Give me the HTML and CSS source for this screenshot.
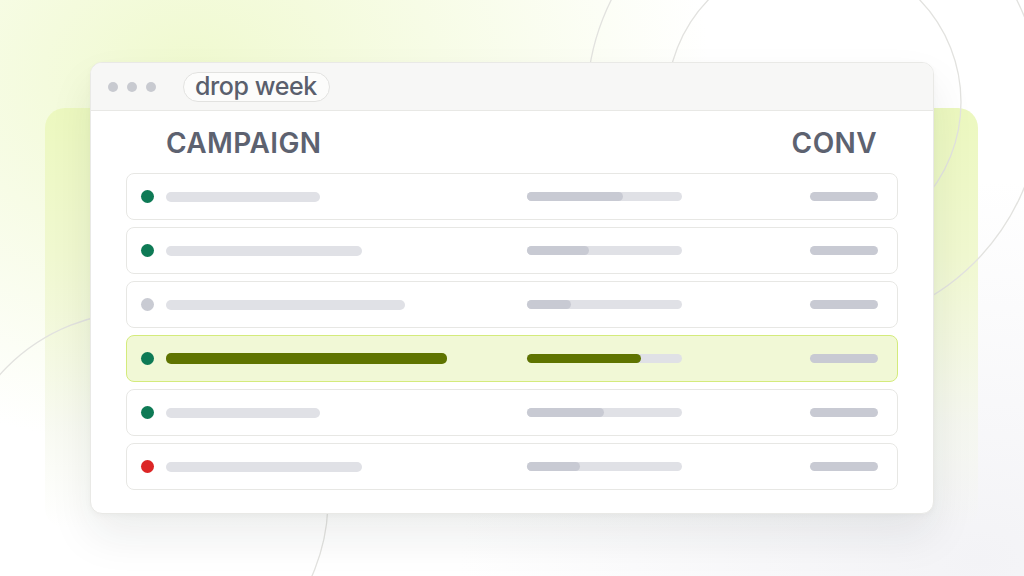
FILE: index.html
```html
<!DOCTYPE html>
<html lang="en">
<head>
<meta charset="utf-8">
<title>drop week</title>
<link rel="stylesheet" href="styles.css">
</head>
<body>
<div class="stage">
  <div class="backdrop"></div>
  <svg class="rings" width="1024" height="576" viewBox="0 0 1024 576" aria-hidden="true">
    <circle cx="814" cy="102" r="147" />
    <circle cx="814" cy="102" r="227" />
    <circle cx="140" cy="500" r="188" />
  </svg>
  <div class="window">
    <div class="titlebar">
      <span class="dots"><i></i><i></i><i></i></span>
      <span class="tab">drop week</span>
    </div>
    <div class="content">
      <div class="head"><span>CAMPAIGN</span><span>CONV</span></div>
      <div class="rows">
        <div class="row">
          <span class="dot dot-green"></span>
          <span class="name" style="width:154px"></span>
          <span class="track"><span class="fill" style="width:96px"></span></span>
          <span class="conv"></span>
        </div>
        <div class="row">
          <span class="dot dot-green"></span>
          <span class="name" style="width:196px"></span>
          <span class="track"><span class="fill" style="width:62px"></span></span>
          <span class="conv"></span>
        </div>
        <div class="row">
          <span class="dot dot-gray"></span>
          <span class="name" style="width:239px"></span>
          <span class="track"><span class="fill" style="width:44px"></span></span>
          <span class="conv"></span>
        </div>
        <div class="row row-active">
          <span class="dot dot-green"></span>
          <span class="name" style="width:281px"></span>
          <span class="track"><span class="fill" style="width:114px"></span></span>
          <span class="conv"></span>
        </div>
        <div class="row">
          <span class="dot dot-green"></span>
          <span class="name" style="width:154px"></span>
          <span class="track"><span class="fill" style="width:77px"></span></span>
          <span class="conv"></span>
        </div>
        <div class="row">
          <span class="dot dot-red"></span>
          <span class="name" style="width:196px"></span>
          <span class="track"><span class="fill" style="width:53px"></span></span>
          <span class="conv"></span>
        </div>
      </div>
    </div>
  </div>
</div>
</body>
</html>
```
FILE: styles.css
```css
* { box-sizing: border-box; }
html, body { margin: 0; padding: 0; }
body {
  width: 1024px;
  height: 576px;
  overflow: hidden;
  font-family: Inter, "Noto Sans", "Liberation Sans", sans-serif;
  background: #ffffff;
}
.stage {
  position: relative;
  width: 1024px;
  height: 576px;
  display: flex;
  align-items: center;
  justify-content: center;
  overflow: hidden;
  background:
    radial-gradient(ellipse 520px 380px at 190px 70px, rgba(236, 248, 196, 0.8), rgba(236, 248, 196, 0) 100%),
    radial-gradient(ellipse 520px 380px at 980px 560px, rgba(240, 240, 244, 0.8), rgba(240, 240, 244, 0) 100%),
    #ffffff;
}
.backdrop {
  position: absolute;
  left: 45px;
  top: 108px;
  width: 933px;
  height: 420px;
  border-radius: 20px;
  background: linear-gradient(180deg, #ecf8bf 0%, #f0f8d0 35%, rgba(243, 246, 232, 0.6) 75%, rgba(246, 247, 242, 0) 100%);
  z-index: 0;
}
.rings {
  position: absolute;
  left: 0;
  top: 0;
  z-index: 1;
  fill: none;
  stroke: #e2e2df;
  stroke-width: 1.3;
}
.window {
  position: relative;
  z-index: 2;
  width: 844px;
  height: 452px;
  border: 1px solid #e9e9e6;
  border-radius: 12px;
  background: #ffffff;
  box-shadow: 0 22px 44px rgba(30, 32, 40, 0.08), 0 2px 6px rgba(30, 32, 40, 0.03);
  overflow: hidden;
  display: flex;
  flex-direction: column;
}
.titlebar {
  height: 48px;
  flex: none;
  display: flex;
  align-items: center;
  padding-left: 17px;
  background: #f7f7f6;
  border-bottom: 1px solid #e8e8e5;
}
.dots {
  display: flex;
  gap: 9px;
}
.dots i {
  width: 10px;
  height: 10px;
  border-radius: 50%;
  background: #c8cad0;
}
.tab {
  margin-left: 27px;
  height: 30px;
  display: flex;
  align-items: center;
  padding: 0 12px 2px 11px;
  border: 1px solid #e2e2e0;
  border-radius: 15px;
  background: #fcfcfb;
  font-size: 25px;
  font-weight: 500;
  letter-spacing: -0.4px;
  color: #5a5f6d;
}
.content {
  flex: 1;
  padding: 18px 35px 0 35px;
}
.head {
  display: flex;
  justify-content: space-between;
  padding: 0 21px 0 40px;
  font-size: 28px;
  line-height: 28px;
  font-weight: 600;
  letter-spacing: 0.4px;
  color: #5d6270;
}
.rows {
  margin-top: 16px;
  display: flex;
  flex-direction: column;
  gap: 7px;
}
.row {
  height: 47px;
  border: 1px solid #e7e7e4;
  border-radius: 8px;
  background: #ffffff;
  display: grid;
  grid-template-columns: 13px 373px 155px 1fr;
  align-items: center;
  padding: 0 19px 0 14px;
}
.row-active {
  background: #f1f8d6;
  border-color: #d4eb7c;
}
.dot {
  width: 13px;
  height: 13px;
  border-radius: 50%;
}
.dot-green { background: #0e7a55; }
.dot-gray { background: #c9cbd3; }
.dot-red { background: #dc2626; }
.name {
  margin-left: 12px;
  height: 10px;
  border-radius: 5px;
  background: #e0e1e6;
}
.row-active .name {
  height: 11px;
  background: #5f7400;
}
.track {
  height: 9px;
  border-radius: 5px;
  background: #e0e1e6;
  display: flex;
}
.fill {
  height: 100%;
  border-radius: 5px;
  background: #c8cad3;
}
.row-active .fill {
  background: #5f7400;
}
.conv {
  justify-self: end;
  width: 68px;
  height: 9px;
  border-radius: 5px;
  background: #c8cad3;
}
```
